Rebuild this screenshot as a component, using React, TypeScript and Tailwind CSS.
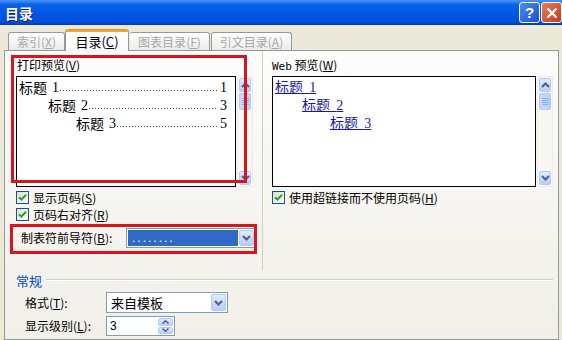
import React from 'react'

function Acc({ k }: { k: string }) {
  return (
    <span>
      (<span className="underline">{k}</span>)
    </span>
  )
}

function Chevron({ dir }: { dir: 'up' | 'down' }) {
  return (
    <svg width="9" height="6" viewBox="0 0 9 6">
      <path
        d={dir === 'up' ? 'M1 5 L4.5 1.5 L8 5' : 'M1 1 L4.5 4.5 L8 1'}
        stroke="#4D6185"
        strokeWidth="2"
        fill="none"
      />
    </svg>
  )
}

function ScrollBar() {
  return (
    <div className="w-[16px] h-full flex flex-col bg-[#F8F7F3] border border-[#EEEDE5] p-[1px]">
      <div className="h-[14px] rounded-[2px] border border-[#B6CAF7] bg-gradient-to-b from-[#E1EAFE] to-[#B9CCF8] flex items-center justify-center">
        <Chevron dir="up" />
      </div>
      <div className="mt-[1px] h-[17px] rounded-[2px] border border-[#B6CAF7] bg-gradient-to-r from-[#C9D8FC] to-[#BCD0FA] flex flex-col items-center justify-center gap-[1px]">
        <span className="w-[7px] h-[1px] bg-[#8CB0F8]" />
        <span className="w-[7px] h-[1px] bg-[#8CB0F8]" />
        <span className="w-[7px] h-[1px] bg-[#8CB0F8]" />
        <span className="w-[7px] h-[1px] bg-[#8CB0F8]" />
      </div>
      <div className="flex-1" />
      <div className="h-[14px] rounded-[2px] border border-[#B6CAF7] bg-gradient-to-b from-[#E1EAFE] to-[#B9CCF8] flex items-center justify-center">
        <Chevron dir="down" />
      </div>
    </div>
  )
}

function Check({ children }: { children: React.ReactNode }) {
  return (
    <div className="flex items-center gap-[4px] h-[13px]">
      <span className="w-[13px] h-[13px] border border-[#1C5180] bg-gradient-to-br from-[#DCDCD7] to-white flex items-center justify-center">
        <svg width="9" height="9" viewBox="0 0 9 9">
          <path d="M1 4.2 L3.4 6.6 L8 1.8" stroke="#21A121" strokeWidth="2" fill="none" />
        </svg>
      </span>
      <span className="leading-[13px]">{children}</span>
    </div>
  )
}

function ComboButton() {
  return (
    <div className="w-[15px] h-full rounded-[2px] border border-[#B6CAF7] bg-gradient-to-b from-[#E1EAFE] to-[#B9CCF8] flex items-center justify-center">
      <Chevron dir="down" />
    </div>
  )
}

const printRows = [
  { indent: 0, n: '1', page: '1' },
  { indent: 29, n: '2', page: '3' },
  { indent: 57, n: '3', page: '5' },
]

export default function App() {
  return (
    <div className="w-[562px] h-[340px] overflow-hidden bg-[#ECE9D8] flex flex-col text-[12px] text-black font-['Noto_Sans_CJK_SC','Liberation_Sans',sans-serif]">
      {/* Title bar */}
      <div className="h-[25px] shrink-0 flex items-center bg-[linear-gradient(to_bottom,#4A96F6_0%,#0A62EA_18%,#0057E5_55%,#004CD8_90%,#003CB0_100%)]">
        <span className="pl-[5px] text-white font-bold text-[14px] leading-none [text-shadow:1px_1px_0_#0A1E6E]">目录</span>
        <div className="ml-auto flex gap-[1px] h-[21px]">
          <div className="w-[21px] h-[21px] rounded-[3px] border border-white bg-gradient-to-br from-[#4F8BF5] to-[#1A4FD0] flex items-center justify-center text-white font-bold text-[15px] font-['Liberation_Sans',sans-serif] leading-none">
            ?
          </div>
          <div className="w-[21px] h-[21px] rounded-[3px] border border-white bg-gradient-to-br from-[#E87A5C] to-[#C63A14] flex items-center justify-center">
            <svg width="12" height="12" viewBox="0 0 12 12">
              <path d="M1.5 1.5 L10.5 10.5 M10.5 1.5 L1.5 10.5" stroke="white" strokeWidth="2.4" />
            </svg>
          </div>
        </div>
      </div>

      {/* Tabs */}
      <div className="h-[25px] shrink-0 flex items-end pl-[8px] relative z-10">
        <div className="w-[57px] h-[18px] border border-b-0 border-[#919B9C] rounded-t-[3px] bg-gradient-to-b from-white to-[#ECEBE6] text-[#A7A6AA] flex items-center justify-center">
          索引<Acc k="X" />
        </div>
        <div className="w-[64px] h-[22px] -mb-[1px] border-x border-[#919B9C] rounded-t-[3px] bg-[#FCFCFE] flex flex-col">
          <div className="h-[3px] rounded-t-[3px] bg-[#F1A630] border-t border-[#E68B2C]" />
          <div className="flex-1 flex items-center justify-center text-[13px]">
            目录<Acc k="C" />
          </div>
        </div>
        <div className="w-[80px] h-[18px] border border-b-0 border-l-0 border-[#919B9C] rounded-t-[3px] bg-gradient-to-b from-white to-[#ECEBE6] text-[#A7A6AA] flex items-center justify-center ml-[1px]">
          图表目录<Acc k="F" />
        </div>
        <div className="w-[81px] h-[18px] border border-b-0 border-[#919B9C] rounded-t-[3px] bg-gradient-to-b from-white to-[#ECEBE6] text-[#A7A6AA] flex items-center justify-center ml-[1px]">
          引文目录<Acc k="A" />
        </div>
      </div>

      {/* Panel */}
      <div className="relative ml-[4px] w-[555px] flex-1 border border-[#919B9C] bg-gradient-to-b from-[#FCFCFB] to-[#F1EFE8] flex flex-col">
        <div className="h-[219px] flex shrink-0">
          {/* Left: print preview */}
          <div className="w-[258px] border-r border-[#D0D0BF] pl-[11px] pt-[7px] flex flex-col">
            <div className="ml-[1px] leading-[14px] h-[14px]">
              打印预览<Acc k="V" />
            </div>
            <div className="mt-[4px] h-[111px] flex gap-[1px]">
              <div className="w-[220px] h-full bg-white border border-black pt-[1px] pl-[2px] pr-[8px] text-[14px]">
                {printRows.map((r) => (
                  <div key={r.n} className="h-[18px] flex items-center" style={{ paddingLeft: r.indent }}>
                    <span className="whitespace-nowrap">标题</span>
                    <span className="ml-[5px] font-['Liberation_Serif',serif]">{r.n}</span>
                    <div className="flex-1 self-end mb-[5px] mx-[1px] h-[1px] bg-[linear-gradient(to_right,#444_1px,transparent_1px)] bg-[length:3px_1px] bg-repeat-x" />
                    <span className="ml-[2px] font-['Liberation_Serif',serif]">{r.page}</span>
                  </div>
                ))}
              </div>
              <ScrollBar />
            </div>
            <div className="mt-[4px] flex flex-col gap-[4px]">
              <Check>
                显示页码<Acc k="S" />
              </Check>
              <Check>
                页码右对齐<Acc k="R" />
              </Check>
            </div>
            <div className="mt-[7px] h-[20px] flex items-center">
              <span className="ml-[5px] w-[105px]">
                制表符前导符<Acc k="B" />:
              </span>
              <div className="w-[130px] h-[20px] bg-white border border-[#7F9DB9] flex items-stretch p-[1px]">
                <div className="flex-1 bg-[#316AC5] text-white flex items-center pl-[4px] mr-[1px] font-['Liberation_Sans',sans-serif] tracking-[2px] leading-none">
                  ........
                </div>
                <ComboButton />
              </div>
            </div>
          </div>

          {/* Right: web preview */}
          <div className="flex-1 pl-[9px] pt-[7px] flex flex-col">
            <div className="leading-[14px] h-[14px]">
              <span className="font-['DejaVu_Sans_Mono',monospace] text-[11px]">Web</span> 预览<Acc k="W" />
            </div>
            <div className="mt-[4px] h-[111px] flex gap-[1px]">
              <div className="w-[264px] h-full bg-white border border-black pt-[1px] pl-[2px] text-[14px] text-[#1A1AA6]">
                {printRows.map((r) => (
                  <div key={r.n} className="h-[18px] flex items-center" style={{ paddingLeft: r.indent - (r.indent ? 2 : 0) }}>
                    <span className="underline whitespace-nowrap">
                      标题&nbsp;&nbsp;<span className="font-['Liberation_Serif',serif]">{r.n}</span>
                    </span>
                  </div>
                ))}
              </div>
              <ScrollBar />
            </div>
            <div className="mt-[4px]">
              <Check>
                使用超链接而不使用页码<Acc k="H" />
              </Check>
            </div>
          </div>
        </div>

        {/* General group */}
        <div className="h-[16px] flex items-center pl-[11px] pr-[5px] mt-[2px]">
          <span className="text-[#0046D5] text-[13px] leading-none">常规</span>
          <div className="ml-[4px] flex-1 h-[2px] border-t border-[#D0D0BF] border-b border-b-white" />
        </div>
        <div className="mt-[4px] h-[21px] flex items-center pl-[20px]">
          <span className="w-[81px]">
            格式<Acc k="T" />:
          </span>
          <div className="w-[122px] h-[21px] bg-white border border-[#7F9DB9] flex items-stretch p-[1px]">
            <span className="flex-1 pl-[3px] text-[13px] flex items-center">来自模板</span>
            <ComboButton />
          </div>
        </div>
        <div className="mt-[3px] h-[20px] flex items-center pl-[20px]">
          <span className="w-[81px]">
            显示级别<Acc k="L" />:
          </span>
          <div className="w-[69px] h-[20px] bg-white border border-[#7F9DB9] flex items-stretch p-[1px]">
            <span className="flex-1 pl-[2px] flex items-center font-['Liberation_Sans',sans-serif]">3</span>
            <div className="w-[15px] flex flex-col gap-[1px]">
              <div className="flex-1 rounded-[2px] border border-[#B6CAF7] bg-gradient-to-b from-[#E1EAFE] to-[#B9CCF8] flex items-center justify-center">
                <svg width="7" height="4" viewBox="0 0 7 4"><path d="M0.5 3.5 L3.5 0.8 L6.5 3.5" stroke="#4D6185" strokeWidth="1.5" fill="none" /></svg>
              </div>
              <div className="flex-1 rounded-[2px] border border-[#B6CAF7] bg-gradient-to-b from-[#E1EAFE] to-[#B9CCF8] flex items-center justify-center">
                <svg width="7" height="4" viewBox="0 0 7 4"><path d="M0.5 0.5 L3.5 3.2 L6.5 0.5" stroke="#4D6185" strokeWidth="1.5" fill="none" /></svg>
              </div>
            </div>
          </div>
        </div>

        {/* Red annotation boxes */}
        <div className="absolute left-[6px] top-[4px] w-[236px] h-[128px] border-[3px] border-[#D8141E] pointer-events-none" />
        <div className="absolute left-[5px] top-[173px] w-[247px] h-[30px] border-[3px] border-[#D8141E] pointer-events-none" />
      </div>
    </div>
  )
}
